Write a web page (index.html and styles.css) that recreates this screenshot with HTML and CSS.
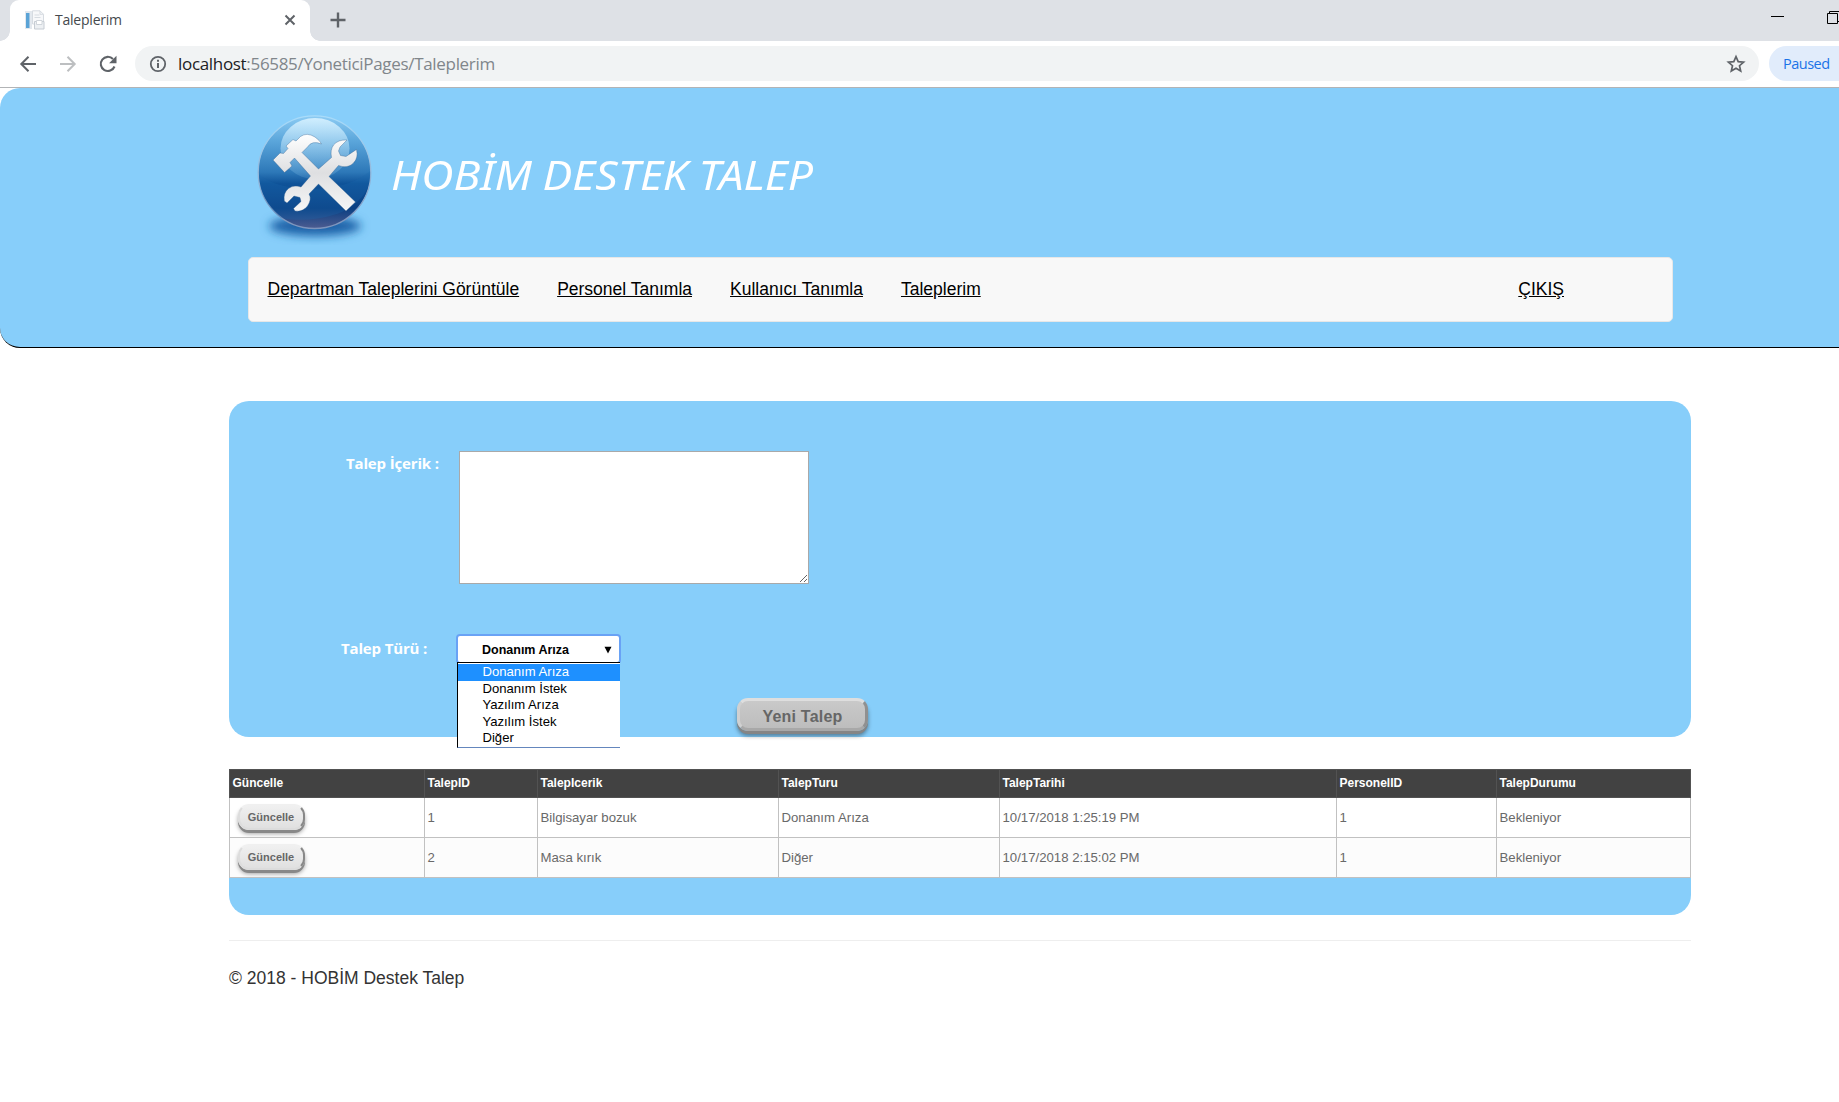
FILE: index.html
```html
<!DOCTYPE html>
<html lang="tr">
<head>
<meta charset="utf-8">
<title>Taleplerim</title>
<link rel="stylesheet" href="styles.css">
</head>
<body>
<div class="tabstrip">
  <div class="tab">
    <svg class="tab-icon" width="20" height="20" viewBox="0 0 20 20">
      <path d="M0 1h7v18H0z" fill="#e3e8ee"/><path d="M1 3h3.500v15H1z" fill="#5aa3d6"/>
      <path d="M7.500.8h7.500l3.500 3.500V14h-11z" fill="#f7f8fa" stroke="#d6dbe1"/><path d="M15 .8v3.500h3.500M9.500 5h5M9.500 7.500h6" fill="none" stroke="#d6dbe1"/>
      <path d="M9.500 11.500h9.500v7.500H9.500z" fill="#edf0f3" stroke="#c6ccd3"/><path d="M11.500 10.500h5.500v4h-5.500z" fill="#fff" stroke="#d0d5db"/>
    </svg>
    <span class="tab-title">Taleplerim</span>
    <svg class="tab-close" width="12" height="12" viewBox="0 0 12 12"><path d="M1.500 1.500l9 9M10.500 1.500l-9 9" stroke="#5f6368" stroke-width="2"/></svg>
  </div>
  <svg class="tab-new" width="16" height="16" viewBox="0 0 16 16"><path d="M8 .5v15M.5 8h15" stroke="#5f6368" stroke-width="2.400"/></svg>
  <svg class="win-min" width="13" height="13" viewBox="0 0 13 13"><path d="M0 8.500h13" stroke="#000"/></svg>
  <svg class="win-max" width="12" height="13" viewBox="0 0 12 13"><path d="M.5 2.500h10v10H.5zM2.500 2.500v-2h10v10h-2" fill="none" stroke="#000"/></svg>
</div>
<div class="toolbar">
  <svg class="nav-icon" width="20" height="20" viewBox="0 0 20 20"><path d="M18 10H3.500M10.500 2.800L3.300 10l7.200 7.200" fill="none" stroke="#5f6368" stroke-width="2"/></svg>
  <svg class="nav-icon" width="20" height="20" viewBox="0 0 20 20"><path d="M2 10h14.500M9.500 2.800l7.200 7.200-7.200 7.200" fill="none" stroke="#bdbfc1" stroke-width="2"/></svg>
  <svg class="nav-icon" width="20" height="20" viewBox="0 0 20 20"><path d="M16.500 12.500A7.100 7.100 0 1 1 15 5" fill="none" stroke="#5f6368" stroke-width="2.100"/><path d="M18.500 1.800v7.400h-7.400z" fill="#5f6368"/></svg>
  <div class="omnibox">
    <svg width="18" height="18" viewBox="0 0 18 18"><circle cx="9" cy="9" r="7.200" fill="none" stroke="#5f6368" stroke-width="1.800"/><path d="M9 8v5M9 4.800v2" stroke="#5f6368" stroke-width="2"/></svg>
    <span class="url"><b>localhost</b>:56585/YoneticiPages/Taleplerim</span>
    <svg class="star" width="20" height="20" viewBox="0 0 20 20"><path d="M10 2.600l2.200 5 5.400.5-4.100 3.600 1.200 5.300-4.700-2.800L5.300 17l1.200-5.300L2.400 8.100l5.400-.5z" fill="none" stroke="#5f6368" stroke-width="1.700"/></svg>
  </div>
  <div class="paused">Paused</div>
</div>
<header class="site-header">
  <div class="brand">
    <svg class="logo" width="130" height="140" viewBox="0 0 130 140">
      <defs>
        <linearGradient id="ball" x1="0" y1="0" x2="0" y2="1"><stop offset="0" stop-color="#8ccbf3"/><stop offset=".22" stop-color="#5ba6db"/><stop offset=".5" stop-color="#2d78b8"/><stop offset=".6" stop-color="#0f5399"/><stop offset=".82" stop-color="#0a3f82"/><stop offset="1" stop-color="#4d5c91"/></linearGradient>
        <linearGradient id="shine" x1="0" y1="0" x2="0" y2="1"><stop offset="0" stop-color="#d4f0ff" stop-opacity=".95"/><stop offset="1" stop-color="#8cc8ee" stop-opacity=".15"/></linearGradient>
        <linearGradient id="metal" x1="0" y1="0" x2="0" y2="1"><stop offset="0" stop-color="#fff"/><stop offset=".5" stop-color="#dedfe1"/><stop offset="1" stop-color="#f6f6f6"/></linearGradient>
        <linearGradient id="rim" x1="0" y1="0" x2="0" y2="1"><stop offset="0" stop-color="#a9dcfa"/><stop offset="1" stop-color="#7d93bb"/></linearGradient>
        <filter id="soft" x="-30%" y="-80%" width="160%" height="260%"><feGaussianBlur stdDeviation="5"/></filter>
      </defs>
      <ellipse cx="65" cy="121" rx="46" ry="10" fill="#1d62a8" filter="url(#soft)"/>
      <circle cx="64.500" cy="67.200" r="56.300" fill="url(#ball)" stroke="url(#rim)" stroke-width="1.300"/>
      <path d="M9.500 70C30 88 95 90 120 66C122 84 110 98 92 107C70 116 45 116 31 113C17 102 9 88 9.500 70Z" fill="#1c67ad" opacity=".3"/>
      <ellipse cx="65" cy="43.500" rx="34.500" ry="30.500" fill="url(#shine)"/>
      <g fill="url(#metal)" stroke="#2c5d8c" stroke-opacity=".45" stroke-width=".8">
        <path d="M105.500 97L96 106L68.500 79L59 89Q62 94 57.500 101Q53 107 45 106L43.500 103.500L51 96.500L50 92.500L44 91L37 98L34.300 96Q33 88 38.500 83.500Q44 79.500 51 82L60.500 71L44.500 53L40 57.500L42 61L34.500 67.500L23 55L30 48L33.500 48.500L38 43.500L36 41L43 34.500L46 36L50.500 31.500Q57 27 65 32Q70 35.500 71.500 39Q62 35 57.500 42L52 47.500L68.500 64L81.500 52.500Q80 45 83.500 40Q88 34.500 97 35L90 42L88.500 46L90.500 50.500L96 51.500L106.500 44.500Q108.500 53 103.500 58Q97.500 64 88.500 60.500L79 71.500Z"/>
      </g>
    </svg>
    <h1>HOBİM DESTEK TALEP</h1>
  </div>
  <nav class="navbar">
    <a>Departman Taleplerini Görüntüle</a>
    <a>Personel Tanımla</a>
    <a>Kullanıcı Tanımla</a>
    <a>Taleplerim</a>
    <a class="exit">ÇIKIŞ</a>
  </nav>
</header>
<main>
  <section class="form-panel">
    <div class="row-text">
      <label>Talep İçerik :</label>
      <textarea></textarea>
    </div>
    <div class="row-type">
      <label>Talep Türü :</label>
      <div class="select">
        <span>Donanım Arıza</span>
        <svg width="8" height="8" viewBox="0 0 8 8"><path d="M.5.800h7L4 7.500z"/></svg>
        <ul class="options">
          <li class="active">Donanım Arıza</li>
          <li>Donanım İstek</li>
          <li>Yazılım Arıza</li>
          <li>Yazılım İstek</li>
          <li>Diğer</li>
        </ul>
      </div>
    </div>
    <button class="btn-new">Yeni Talep</button>
  </section>
  <section class="grid-panel">
    <table>
      <colgroup><col class="c1"><col class="c2"><col class="c3"><col class="c4"><col class="c5"><col class="c6"><col class="c7"></colgroup>
      <thead><tr><th>Güncelle</th><th>TalepID</th><th>TalepIcerik</th><th>TalepTuru</th><th>TalepTarihi</th><th>PersonelID</th><th>TalepDurumu</th></tr></thead>
      <tbody>
        <tr><td><button class="btn-row">Güncelle</button></td><td>1</td><td>Bilgisayar bozuk</td><td>Donanım Arıza</td><td>10/17/2018 1:25:19 PM</td><td>1</td><td>Bekleniyor</td></tr>
        <tr><td><button class="btn-row">Güncelle</button></td><td>2</td><td>Masa kırık</td><td>Diğer</td><td>10/17/2018 2:15:02 PM</td><td>1</td><td>Bekleniyor</td></tr>
      </tbody>
    </table>
  </section>
  <footer>© 2018 - HOBİM Destek Talep</footer>
</main>
</body>
</html>
```
FILE: styles.css
```css
* { box-sizing: border-box; }
body {
  margin: 0;
  width: 1839px;
  height: 1102px;
  overflow: hidden;
  background: #fff;
  color: #333;
  font-family: "Liberation Sans", Arial, sans-serif;
  font-size: 17.5px;
}
svg { display: block; flex: none; }

/* Browser chrome */
.tabstrip {
  display: flex;
  height: 41px;
  padding-left: 10px;
  background: #dee1e6;
  font-family: "Open Sans", sans-serif;
}
.tab {
  position: relative;
  display: flex;
  align-items: center;
  width: 300px;
  height: 41px;
  padding: 0 14px 2px 15px;
  background: #fff;
  border-radius: 9px 9px 0 0;
}
.tab::before, .tab::after {
  content: "";
  position: absolute;
  bottom: 0;
  width: 10px;
  height: 10px;
}
.tab::before { left: -10px; background: radial-gradient(circle at 0 0, #dee1e6 9.5px, #fff 10px); }
.tab::after { right: -10px; background: radial-gradient(circle at 100% 0, #dee1e6 9.5px, #fff 10px); }
.tab-title { margin-left: 10px; font-size: 14px; letter-spacing: -.22px; color: #45494d; }
.tab-close { margin-left: auto; }
.tab-new { margin: 12px 0 0 19.5px; }
.win-min { margin: 8px 0 0 auto; }
.win-max { margin: 11px 0 0 43px; }
.toolbar {
  display: flex;
  align-items: center;
  height: 47px;
  padding: 0 0 1px 18px;
  border-bottom: 1px solid #b2b4b6;
  font-family: "Open Sans", sans-serif;
}
.nav-icon { margin-right: 20px; }
.omnibox {
  display: flex;
  flex: none;
  align-items: center;
  width: 1624px;
  height: 35px;
  margin-left: -3px;
  padding: 0 13px 0 14px;
  border-radius: 18px;
  background: #f1f3f4;
}
.url { margin-left: 11px; font-size: 17px; letter-spacing: -.32px; color: #80868b; white-space: nowrap; }
.url b { font-weight: 400; color: #202124; }
.star { margin-left: auto; }
.paused {
  flex: none;
  width: 90px;
  height: 35px;
  margin-left: 10px;
  padding-left: 14px;
  border-radius: 18px;
  background: #e1ecfb;
  color: #1a73e8;
  font-size: 14.5px;
  letter-spacing: -.5px;
  line-height: 36px;
}

/* Site header */
.site-header {
  width: 1870px;
  height: 260px;
  padding: 17px 0 0 248px;
  background: #87cefa;
  border-bottom: 1px solid #000;
  border-radius: 20px;
}
.brand { display: flex; height: 152px; padding-left: 2px; }
.brand h1 {
  margin: 43px 0 0 10.5px;
  color: #fff;
  font: italic 400 40.5px/54px "Noto Sans", sans-serif;
  word-spacing: -1px;
  transform: scaleX(1.1);
  transform-origin: left;
  white-space: nowrap;
}
.navbar {
  display: flex;
  gap: 38px;
  width: 1425px;
  height: 65px;
  padding: 19px 108px 0 18.5px;
  border: 1px solid #e7e7e7;
  border-radius: 5px;
  background: #f8f8f8;
  color: #000;
  line-height: 25px;
}
.navbar a { text-decoration: underline; white-space: nowrap; }
.navbar .exit { margin-left: auto; }

/* Content */
main { width: 1462px; margin: 53px 0 0 229px; }
.form-panel {
  height: 336px;
  padding-top: 50px;
  border-radius: 20px;
  background: #87cefa;
}
.form-panel label {
  color: #fff;
  font: 700 15px/22px "Open Sans", sans-serif;
  letter-spacing: -.15px;
  white-space: nowrap;
}
.row-text { display: flex; height: 183px; padding-left: 117px; }
.row-text label { width: 113px; padding-top: 1px; }
textarea {
  width: 350px;
  height: 133px;
  border: 1px solid #a9a9a9;
  background: #fff;
  outline: none;
}
.row-type { display: flex; height: 63px; padding-left: 112px; }
.row-type label { width: 115px; padding-top: 3px; }
.select {
  position: relative;
  display: flex;
  align-items: center;
  justify-content: space-between;
  width: 165px;
  height: 30px;
  padding: 1px 7px 0 24px;
  border: 2px solid #69a2f5;
  border-radius: 4px;
  background: #fff;
  color: #000;
  font-size: 12.5px;
  font-weight: 700;
}
.options {
  position: absolute;
  top: 26px;
  left: -1px;
  width: 163px;
  height: 86px;
  margin: 0;
  padding: 1px 0 0;
  list-style: none;
  border: solid #000;
  border-width: 1px 0 1px 1px;
  border-bottom-color: #6486bd;
  background: #fff;
  font-size: 13.1px;
  font-weight: 400;
}
.options li { height: 16.6px; padding-left: 24.5px; line-height: 15.6px; white-space: nowrap; }
.options .active { background: #1e90ff; color: #fff; }
button {
  display: block;
  font-family: "Liberation Sans", Arial, sans-serif;
  font-weight: 700;
  color: #666;
  white-space: nowrap;
}
.btn-new {
  width: 131px;
  height: 33px;
  margin: 1px 0 0 508px;
  padding: 4px 0 0;
  border: 3px solid;
  border-color: #dedede #909090 #a8a8a8 #d0d0d0;
  border-radius: 11px;
  background: linear-gradient(#c9c9c9, #bdbdbd);
  box-shadow: 0 3px 0 #858585, 0 5px 4px rgba(0, 0, 0, .4);
  font-size: 16px;
  letter-spacing: .2px;
}

.grid-panel {
  height: 146px;
  margin-top: 32px;
  border-radius: 0 0 20px 20px;
  background: #87cefa;
}
table { width: 1461px; border-collapse: collapse; table-layout: fixed; color: #696969; font-size: 13.2px; }
.c1 { width: 195px; } .c2 { width: 113px; } .c3 { width: 241px; } .c4 { width: 221px; }
.c5 { width: 337px; } .c6 { width: 160px; } .c7 { width: 194px; }
th, td { padding: 0 2.5px; text-align: left; vertical-align: middle; }
th { height: 28px; padding-bottom: 1px; border: 1px solid #525252; background: #424242; color: #fff; font-size: 12px; }
td { height: 40px; border: 1px solid #c1c1c1; background: #fff; }
tr:nth-child(2) td { background: #fcfcfc; }
.btn-row {
  width: 67px;
  height: 26px;
  margin: 0 0 2px 5px;
  padding: 0;
  border: 2px solid;
  border-color: #f0f0f0 #888 #dcdcdc #ddd;
  border-radius: 11px;
  background: linear-gradient(#f0f0f0, #e0e0e0);
  box-shadow: 0 3px 0 #888, 0 4px 4px rgba(0, 0, 0, .35);
  font-size: 11px;
}
footer {
  margin-top: 25px;
  padding-top: 25px;
  border-top: 1px solid #eee;
  line-height: 25px;
}
```
